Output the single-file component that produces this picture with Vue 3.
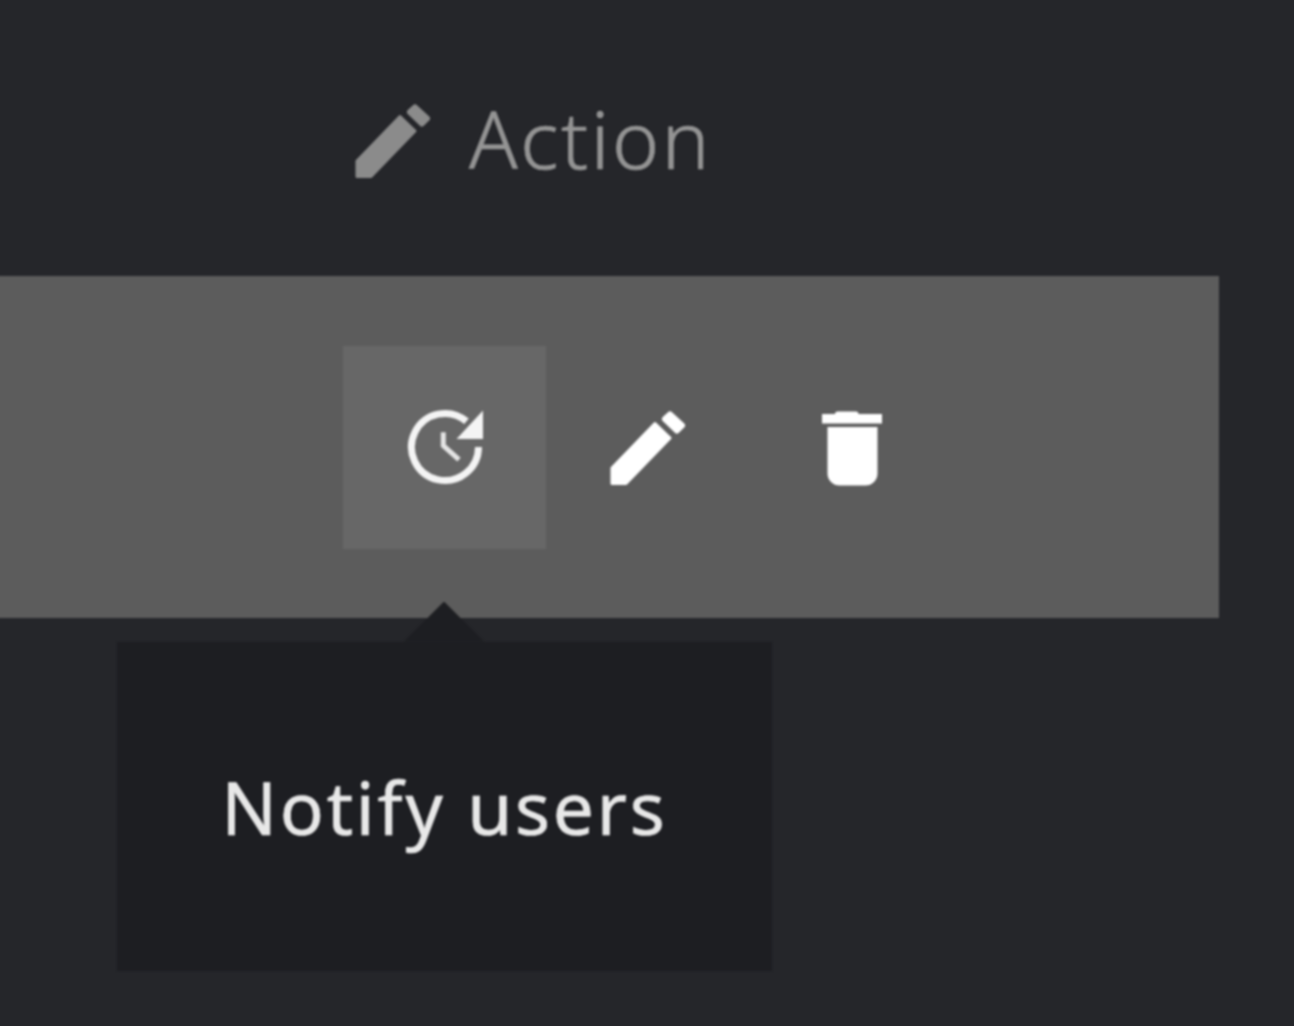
<script setup>
const actions = [
  { key: 'notify', active: true },
  { key: 'edit', active: false },
  { key: 'delete', active: false },
];
</script>

<template>
  <div class="page">
    <div class="canvas">
      <div class="table-head">
        <svg class="pencil" viewBox="0 0 78 78">
          <path d="M3 60 46 15.500 61 30 17 75.500H3Z" />
          <path class="tip" d="M56 11 61 6.500 73 17.500 68 22.500Z" />
        </svg>
        <span class="head-label">Action</span>
      </div>
      <div class="table-row">
        <div
          v-for="item in actions"
          :key="item.key"
          :class="['action-btn', { active: item.active }]"
        >
          <svg v-if="item.key === 'notify'" class="icon" viewBox="0 0 78 78">
            <path class="ring" d="M60.500 13.300A33.500 33.500 0 1 0 72.500 39" />
            <path class="arrow" d="M77 2.500V31H50.500Z" />
            <path class="hands" d="M37.300 24.300V37.700L53 51.700" />
          </svg>
          <svg v-else-if="item.key === 'edit'" class="icon edit" viewBox="0 0 78 78">
            <path d="M3 60 46 15.500 61 30 17 75.500H3Z" />
            <path class="tip" d="M56 11 61 6.500 73 17.500 68 22.500Z" />
          </svg>
          <svg v-else class="icon" viewBox="0 0 78 78">
            <path d="M23 6a2.500 2.500 0 0 1 2.500-2.500H44A2.500 2.500 0 0 1 46.500 6H70V15.500H10V6Z" />
            <path d="M15.500 19H65.500V65.500a12 12 0 0 1-12 12H27.500a12 12 0 0 1-12-12Z" />
          </svg>
          <div v-if="item.active" class="tooltip">
            <span class="tooltip-text">Notify users</span>
          </div>
        </div>
      </div>
    </div>
  </div>
</template>

<style>
html,
body {
  margin: 0;
  background: #25262a;
}
</style>

<style scoped>
.page {
  width: 1294px;
  height: 1026px;
  background: #25262a;
  overflow: hidden;
  font-family: "Noto Sans", "Open Sans", sans-serif;
}

/* runs past the left edge so the soft blur doesn't fade the row there */
.canvas {
  margin-left: -4px;
  padding-left: 4px;
  height: 1026px;
  filter: blur(0.8px);
}

.table-head {
  height: 276px;
  display: flex;
  align-items: center;
  padding-left: 354px;
  gap: 37px;
  box-sizing: border-box;
}

.pencil {
  width: 78px;
  height: 78px;
  fill: #8b8b8b;
  stroke: #8b8b8b;
  stroke-width: 3;
  stroke-linejoin: round;
  margin-top: 4px;
}

.tip {
  stroke-width: 6;
}

.head-label {
  font-size: 80px;
  font-weight: 300;
  line-height: 1;
  letter-spacing: 2.6px;
  color: #949494;
  -webkit-text-stroke: 0.7px #949494;
}

.table-row {
  margin-left: -4px;
  width: 1223px;
  height: 342px;
  background: #5c5c5c;
  display: flex;
  align-items: center;
  padding-left: 347px;
  box-sizing: border-box;
}

.action-btn {
  position: relative;
  width: 203px;
  height: 203px;
  display: flex;
  align-items: center;
  justify-content: center;
}

.action-btn.active {
  background: #676767;
}

.icon {
  width: 78px;
  height: 78px;
  fill: #fff;
}

.edit {
  stroke: #fff;
  stroke-width: 3;
  stroke-linejoin: round;
}

.ring {
  fill: none;
  stroke: #f4f4f4;
  stroke-width: 7;
}

.arrow {
  fill: #f4f4f4;
}

.hands {
  fill: none;
  stroke: #e4e4e4;
  stroke-width: 5;
}

.tooltip {
  position: absolute;
  top: 296px;
  left: -226px;
  width: 655px;
  height: 329px;
  background: #1d1e22;
  display: flex;
  align-items: center;
  justify-content: center;
}

.tooltip::before {
  content: "";
  position: absolute;
  top: -40px;
  left: 287px;
  width: 80px;
  height: 40px;
  background: #1d1e22;
  clip-path: polygon(50% 0, 100% 100%, 0 100%);
}

.tooltip-text {
  font-size: 73px;
  line-height: 1;
  letter-spacing: 2.8px;
  color: #e8e8e8;
  -webkit-text-stroke: 0.7px #e8e8e8;
  white-space: nowrap;
}
</style>
